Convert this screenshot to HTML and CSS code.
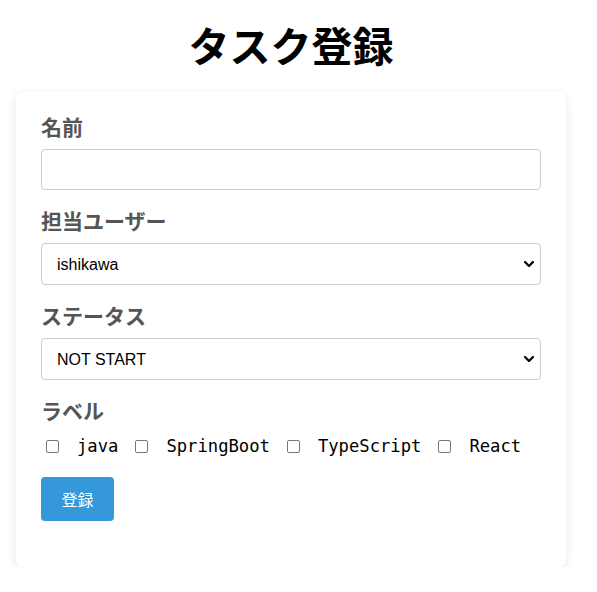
FILE: index.html
```html
<!DOCTYPE html>
<html lang="ja">
<head>
<meta charset="utf-8">
<title>タスク登録</title>
<link rel="stylesheet" href="styles.css">
</head>
<body>
<div class="page">
  <div class="container">
    <h1 class="title">タスク登録</h1>
    <form class="card">
      <div class="group">
        <label class="label" for="name">名前</label>
        <input class="field input" id="name" type="text">
      </div>
      <div class="group">
        <label class="label" for="user">担当ユーザー</label>
        <div class="select-wrap">
          <select class="field select" id="user">
            <option>ishikawa</option>
          </select>
          <svg class="chevron" viewBox="0 0 10 6" width="10" height="6" aria-hidden="true"><path d="M1 1 L5 5 L9 1" fill="none" stroke="#000" stroke-width="2.2" stroke-linecap="square"/></svg>
        </div>
      </div>
      <div class="group">
        <label class="label" for="status">ステータス</label>
        <div class="select-wrap">
          <select class="field select" id="status">
            <option>NOT START</option>
          </select>
          <svg class="chevron" viewBox="0 0 10 6" width="10" height="6" aria-hidden="true"><path d="M1 1 L5 5 L9 1" fill="none" stroke="#000" stroke-width="2.2" stroke-linecap="square"/></svg>
        </div>
      </div>
      <div class="group group-last">
        <span class="label">ラベル</span>
        <div class="checks">
          <label class="check"><input type="checkbox" class="box"><span>java</span></label>
          <label class="check"><input type="checkbox" class="box"><span>SpringBoot</span></label>
          <label class="check"><input type="checkbox" class="box"><span>TypeScript</span></label>
          <label class="check"><input type="checkbox" class="box"><span>React</span></label>
        </div>
      </div>
      <button type="button" class="submit">登録</button>
    </form>
  </div>
</div>
</body>
</html>
```
FILE: styles.css
```css
html, body {
  margin: 0;
  padding: 0;
  background: #ffffff;
}

body {
  font-family: "Noto Sans CJK JP", "Noto Sans", sans-serif;
  color: #000;
}

.page {
  padding-right: 15px;
}

.container {
  max-width: 550px;
  margin: 0 auto;
}

.title {
  font-size: 41px;
  line-height: 52px;
  font-weight: 700;
  text-align: center;
  margin: 18px 0 22px;
}

.card {
  background: #fff;
  border-radius: 8px;
  box-shadow: 0 2px 10px rgba(0, 0, 0, 0.1);
  padding: 24px 25px 46px;
}

.group {
  margin-bottom: 20px;
}

.group-last {
  margin-bottom: 18px;
}

.label {
  display: block;
  font-size: 21px;
  line-height: 20px;
  font-weight: 700;
  color: #555;
  margin-bottom: 13px;
}

.field {
  display: block;
  box-sizing: border-box;
  width: 100%;
  height: 42px;
  padding: 0 15px;
  border: 1px solid #ccc;
  border-radius: 4px;
  font-family: "Liberation Sans", Arial, sans-serif;
  font-size: 16px;
  color: #000;
  background: #fff;
}

.input {
  height: 41px;
}

.select-wrap {
  position: relative;
}

.select {
  appearance: none;
  -webkit-appearance: none;
  padding-right: 36px;
}

.chevron {
  position: absolute;
  right: 7px;
  top: 18px;
  pointer-events: none;
}

.checks {
  display: flex;
  align-items: center;
  gap: 12px;
  height: 26px;
}

.check {
  display: flex;
  align-items: center;
  font-family: "DejaVu Sans Mono", monospace;
  font-size: 17.2px;
  color: #000;
}

.box {
  appearance: none;
  -webkit-appearance: none;
  box-sizing: border-box;
  width: 13px;
  height: 13px;
  margin: 0 18px 0 5px;
  border: 1px solid #767676;
  border-radius: 2px;
  background: #fff;
}

.submit {
  display: block;
  height: 44px;
  padding: 0 20.5px;
  border: none;
  border-radius: 4px;
  background: #3498db;
  color: #fff;
  font-family: "Noto Sans CJK JP", sans-serif;
  font-size: 16px;
}
```
